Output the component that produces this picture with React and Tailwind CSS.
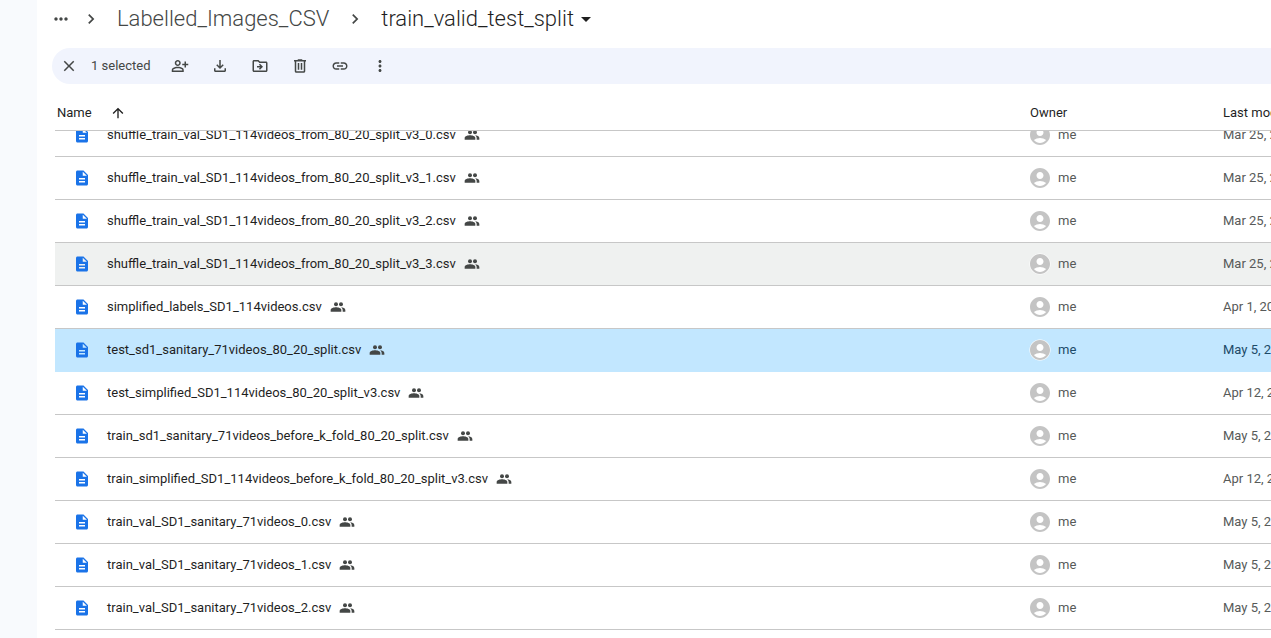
import React, { useLayoutEffect, useRef, useState } from "react";
import {
  MdAccountCircle,
  MdArrowDropDown,
  MdArrowUpward,
  MdChevronRight,
  MdClose,
  MdDescription,
  MdLink,
  MdMoreHoriz,
  MdMoreVert,
  MdOutlineDriveFileMove,
  MdOutlineFileDownload,
  MdOutlinePersonAddAlt,
} from "react-icons/md";

const files = [
  { name: "shuffle_train_val_SD1_114videos_from_80_20_split_v3_0.csv", modified: "Mar 25, 2024" },
  { name: "shuffle_train_val_SD1_114videos_from_80_20_split_v3_1.csv", modified: "Mar 25, 2024" },
  { name: "shuffle_train_val_SD1_114videos_from_80_20_split_v3_2.csv", modified: "Mar 25, 2024" },
  { name: "shuffle_train_val_SD1_114videos_from_80_20_split_v3_3.csv", modified: "Mar 25, 2024" },
  { name: "simplified_labels_SD1_114videos.csv", modified: "Apr 1, 2024" },
  { name: "test_sd1_sanitary_71videos_80_20_split.csv", modified: "May 5, 2024" },
  { name: "test_simplified_SD1_114videos_80_20_split_v3.csv", modified: "Apr 12, 2024" },
  { name: "train_sd1_sanitary_71videos_before_k_fold_80_20_split.csv", modified: "May 5, 2024" },
  { name: "train_simplified_SD1_114videos_before_k_fold_80_20_split_v3.csv", modified: "Apr 12, 2024" },
  { name: "train_val_SD1_sanitary_71videos_0.csv", modified: "May 5, 2024" },
  { name: "train_val_SD1_sanitary_71videos_1.csv", modified: "May 5, 2024" },
  { name: "train_val_SD1_sanitary_71videos_2.csv", modified: "May 5, 2024" },
];

const HOVERED = 3;

const TrashIcon = ({ size }) => (
  <svg width={size} height={size} viewBox="0 0 24 24" fill="currentColor">
    <path d="M15 4V3H9v1H4v2h1v13c0 1.1.9 2 2 2h10c1.1 0 2-.9 2-2V6h1V4h-5zm2 15H7V6h10v13z" />
    <path d="M9 8h2v9H9zM13 8h2v9h-2z" />
  </svg>
);

const SharedIcon = () => (
  <svg
    width={16}
    height={16}
    viewBox="0 0 24 24"
    fill="currentColor"
    className="ml-2 shrink-0 text-[#444746]"
  >
    <circle cx="9" cy="8" r="3" />
    <circle cx="16.5" cy="8" r="3" />
    <path d="M1 19v-2.5C1 13.8 5.8 12.500 9 12.500s8 1.300 8 4V19H1z" />
    <path d="M16.500 12.500c3 .1 6.500 1.500 6.500 4V19h-4v-2.500c0-1.600-1-3-2.500-4z" />
  </svg>
);

const actions = [
  { label: "Share", Icon: MdOutlinePersonAddAlt },
  { label: "Download", Icon: MdOutlineFileDownload },
  { label: "Move", Icon: MdOutlineDriveFileMove },
  { label: "Move to trash", Icon: TrashIcon },
  { label: "Copy link", Icon: MdLink },
  { label: "More actions", Icon: MdMoreVert },
];

const Breadcrumbs = () => (
  <nav className="flex h-[38px] shrink-0 items-center whitespace-nowrap pl-[14px] text-[22px] font-light leading-7 text-[#444746]">
    <button aria-label="Show path">
      <MdMoreHoriz size={20} />
    </button>
    <MdChevronRight size={20} className="ml-[10px] mr-4" />
    <a href="#labelled">Labelled_Images_CSV</a>
    <MdChevronRight size={20} className="mx-4" />
    <button className="flex items-center text-[#1f1f1f]">
      train_valid_test_split
      <MdArrowDropDown size={24} />
    </button>
  </nav>
);

const Toolbar = ({ count, onClear }) => (
  <div className="mt-[10px] ml-[15px] flex h-9 shrink-0 items-center rounded-l-full bg-[#f1f4fd] pl-2 text-[#444746]">
    <button aria-label="Clear selection" onClick={onClear}>
      <MdClose size={18} />
    </button>
    <span className="ml-[13px] w-[69px] text-[13px]">{count} selected</span>
    {actions.map(({ label, Icon }) => (
      <button
        key={label}
        aria-label={label}
        className="flex h-8 w-10 items-center justify-center"
      >
        <Icon size={18} />
      </button>
    ))}
  </div>
);

const FileRow = ({ file, hovered, selected, onSelect }) => {
  const bg = selected ? "bg-[#c2e7ff]" : hovered ? "bg-[#eff1f0]" : "bg-white";
  const line = selected ? "border-[#c2e7ff]" : "border-[#c7c7c7]";
  const meta = selected ? "text-[#1d4a68]" : "text-[#575a59]";

  return (
    <tr className={bg} onClick={onSelect}>
      <td className={`h-[43px] border-b pl-[18px] ${line}`}>
        <div className="flex items-center text-[#1f1f1f]">
          <MdDescription size={18} className="shrink-0 text-[#1a73e8]" />
          <span className="ml-4 whitespace-nowrap">{file.name}</span>
          <SharedIcon />
        </div>
      </td>
      <td className={`border-b ${line} ${meta}`}>
        <div className="flex items-center">
          <span className="rounded-full bg-[radial-gradient(circle,white_10px,transparent_11px)]">
            <MdAccountCircle size={24} className="text-[#c4c4c4]" />
          </span>
          <span className="ml-[6px]">me</span>
        </div>
      </td>
      <td className={`overflow-hidden whitespace-nowrap border-b pl-px ${line} ${meta}`}>
        {file.modified}
      </td>
    </tr>
  );
};

const App = () => {
  const listRef = useRef(null);
  const [selected, setSelected] = useState(5);

  // keep the list scrolled a little way past its first row
  useLayoutEffect(() => {
    listRef.current.scrollTop = 17;
  }, []);

  return (
    <div className="flex h-screen overflow-hidden bg-white font-['Roboto',sans-serif] text-[13px] leading-5 text-[#1f1f1f]">
      <aside className="w-[37px] shrink-0 bg-[#f8fafd]" />
      <main className="flex min-w-0 flex-1 flex-col">
        <Breadcrumbs />
        <Toolbar
          count={selected === null ? 0 : 1}
          onClear={() => setSelected(null)}
        />
        <div
          ref={listRef}
          className="mt-3 ml-[18px] min-h-0 flex-1 overflow-auto pb-10 [scrollbar-width:none]"
        >
          <table className="w-full table-fixed border-separate border-spacing-0 text-left">
            <thead className="sticky top-0 z-10 bg-white">
              <tr>
                <th className="h-[35px] border-b border-[#c7c7c7] font-normal">
                  <button className="flex items-center">
                    <span className="ml-[2px] mr-[18px]">Name</span>
                    <MdArrowUpward size={16} />
                  </button>
                </th>
                <th className="w-[194px] border-b border-[#c7c7c7] pl-[2px] font-normal">
                  Owner
                </th>
                <th className="w-[49px] overflow-hidden whitespace-nowrap border-b border-[#c7c7c7] pl-px font-normal">
                  Last modified
                </th>
              </tr>
            </thead>
            <tbody>
              {files.map((file, index) => (
                <FileRow
                  key={file.name}
                  file={file}
                  hovered={index === HOVERED}
                  selected={index === selected}
                  onSelect={() => setSelected(index)}
                />
              ))}
            </tbody>
          </table>
        </div>
      </main>
    </div>
  );
};

export default App;
